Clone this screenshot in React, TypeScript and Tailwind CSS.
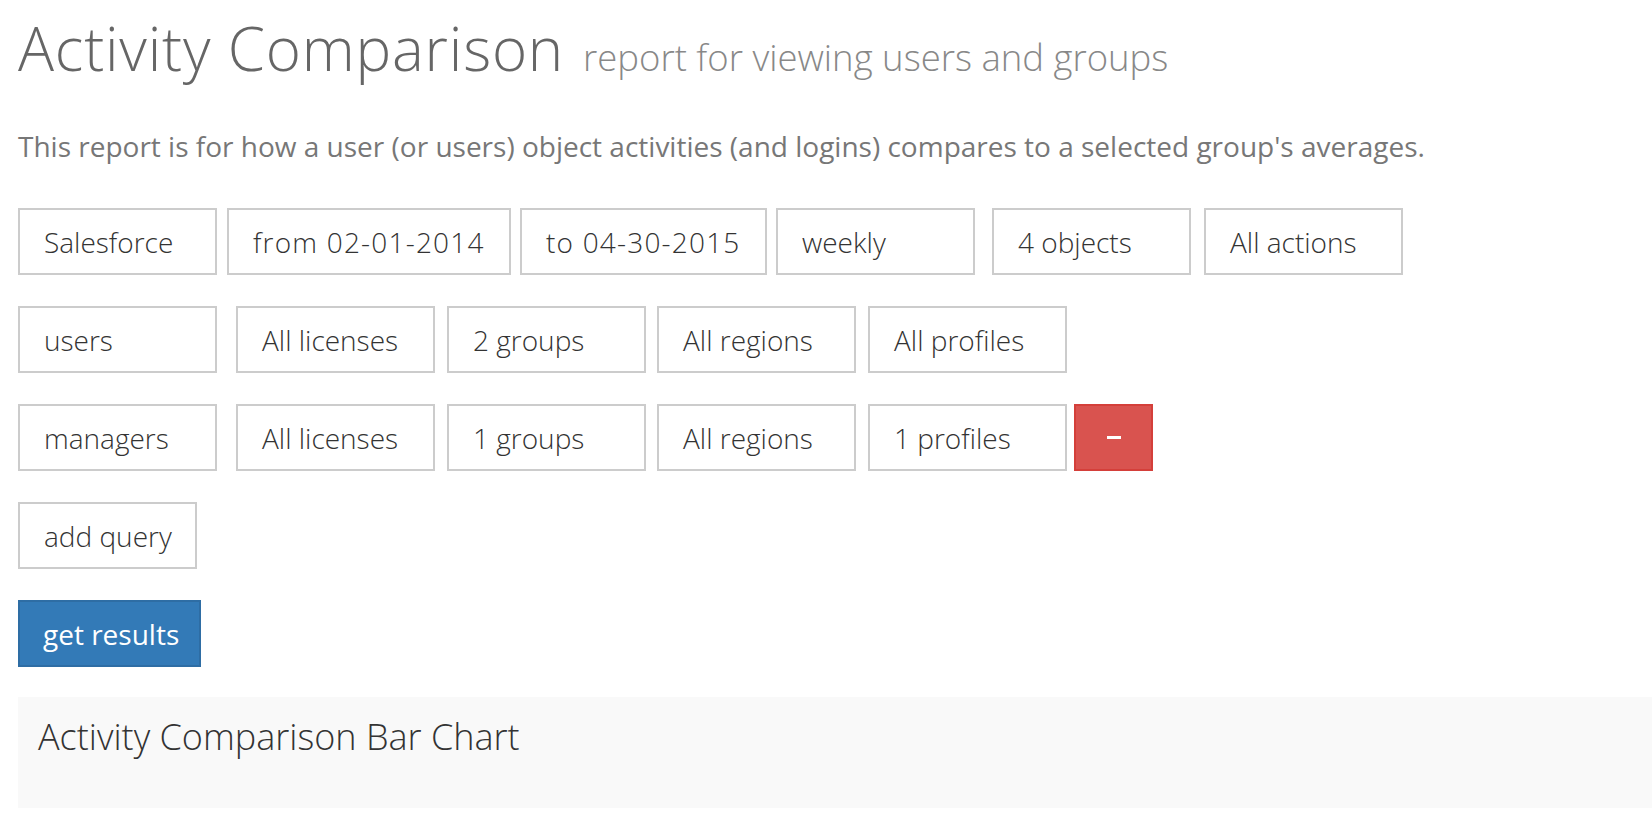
import React from 'react';

type Chip = { label: string; w: string; ml: string; wide?: boolean };

const dateRow: Chip[] = [
  { label: 'Salesforce', w: 'w-[199px]', ml: 'ml-0' },
  { label: 'from 02-01-2014', w: 'w-[284px]', ml: 'ml-[10px]', wide: true },
  { label: 'to 04-30-2015', w: 'w-[247px]', ml: 'ml-[9px]', wide: true },
  { label: 'weekly', w: 'w-[199px]', ml: 'ml-[9px]' },
  { label: '4 objects', w: 'w-[199px]', ml: 'ml-[17px]' },
  { label: 'All actions', w: 'w-[199px]', ml: 'ml-[13px]' },
];

const queryRow = (name: string, groups: string, profiles: string): Chip[] => [
  { label: name, w: 'w-[199px]', ml: 'ml-0' },
  { label: 'All licenses', w: 'w-[199px]', ml: 'ml-[19px]' },
  { label: groups, w: 'w-[199px]', ml: 'ml-[12px]' },
  { label: 'All regions', w: 'w-[199px]', ml: 'ml-[11px]' },
  { label: profiles, w: 'w-[199px]', ml: 'ml-[12px]' },
];

function Box({ label, w, ml, wide }: Chip) {
  return (
    <div
      className={`${w} ${ml} ${wide ? 'tracking-[1.2px]' : ''} h-[67px] shrink-0 flex items-center pl-[24px] border-2 border-[#cccccc] bg-white text-[28px] font-light text-[#333333]`}
    >
      {label}
    </div>
  );
}

function Row({ chips, children }: { chips: Chip[]; children?: React.ReactNode }) {
  return (
    <div className="flex items-center">
      {chips.map((c) => (
        <Box key={c.label + c.ml} {...c} />
      ))}
      {children}
    </div>
  );
}

export default function App() {
  return (
    <div
      className="w-[1652px] h-[826px] overflow-hidden bg-white pl-[18px]"
      style={{ fontFamily: '"Open Sans", "Liberation Sans", sans-serif' }}
    >
      <h1 className="pt-[8px] flex items-baseline text-[#666666]">
        <span className="text-[60px] font-light leading-[80px] tracking-[0.8px]">Activity Comparison</span>
        <span className="ml-[19px] text-[36.5px] font-light text-[#888888]">report for viewing users and groups</span>
      </h1>

      <p className="mt-[40px] text-[28px] leading-[36px] text-[#777777]">
        This report is for how a user (or users) object activities (and logins) compares to a selected group's averages.
      </p>

      <div className="mt-[44px] flex flex-col gap-[31px]">
        <Row chips={dateRow} />
        <Row chips={queryRow('users', '2 groups', 'All profiles')} />
        <Row chips={queryRow('managers', '1 groups', '1 profiles')}>
          <button className="ml-[7px] w-[79px] h-[67px] flex items-center justify-center bg-[#d9534f] border-2 border-[#d43f3a]">
            <span className="block w-[14px] h-[3px] bg-white" />
          </button>
        </Row>
        <div>
          <button className="w-[179px] h-[67px] flex items-center pl-[24px] border-2 border-[#cccccc] bg-white text-[28px] font-light text-[#333333]">
            add query
          </button>
        </div>
        <div>
          <button className="w-[183px] h-[67px] flex items-center pl-[23px] border-2 border-[#2e6da4] bg-[#337ab7] text-[28px] text-white">
            get results
          </button>
        </div>
      </div>

      <div className="mt-[30px] h-[111px] bg-[#f9f9f9] pl-[20px] pt-[17px]">
        <h2 className="text-[36px] font-light text-[#333333] leading-[46px]">Activity Comparison Bar Chart</h2>
      </div>
    </div>
  );
}
